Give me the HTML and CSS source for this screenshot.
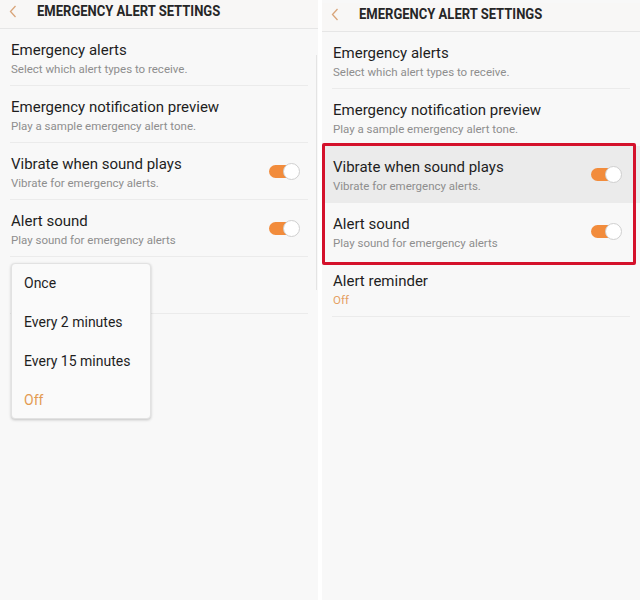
FILE: index.html
```html
<!DOCTYPE html>
<html>
<head>
<meta charset="utf-8">
<link rel="stylesheet" href="styles.css">
</head>
<body>
<div class="panel">
  <div class="header">
    <svg class="back" width="8" height="13" viewBox="0 0 8 13"><path d="M6.5 1 L1.5 6.5 L6.5 12" fill="none" stroke="#d9a57a" stroke-width="1.3"/></svg>
    <span class="title">EMERGENCY ALERT SETTINGS</span>
  </div>
  <div class="row"><div class="row-inner"><div class="txt"><div class="t">Emergency alerts</div><div class="s">Select which alert types to receive.</div></div></div></div>
  <div class="row"><div class="row-inner"><div class="txt"><div class="t">Emergency notification preview</div><div class="s">Play a sample emergency alert tone.</div></div></div></div>
  <div class="row"><div class="row-inner"><div class="txt"><div class="t">Vibrate when sound plays</div><div class="s">Vibrate for emergency alerts.</div></div><span class="toggle"><span class="track"></span><span class="thumb"></span></span></div></div>
  <div class="row"><div class="row-inner"><div class="txt"><div class="t">Alert sound</div><div class="s">Play sound for emergency alerts</div></div><span class="toggle"><span class="track"></span><span class="thumb"></span></span></div></div>
  <div class="row"><div class="row-inner"></div></div>
  <div class="scroll"></div>
  <div class="menu">
    <div class="mi">Once</div>
    <div class="mi">Every 2 minutes</div>
    <div class="mi">Every 15 minutes</div>
    <div class="mi off">Off</div>
  </div>
</div>
<div class="panel right">
  <div class="header">
    <svg class="back" width="8" height="13" viewBox="0 0 8 13"><path d="M6.5 1 L1.5 6.5 L6.5 12" fill="none" stroke="#d9a57a" stroke-width="1.3"/></svg>
    <span class="title">EMERGENCY ALERT SETTINGS</span>
  </div>
  <div class="row"><div class="row-inner"><div class="txt"><div class="t">Emergency alerts</div><div class="s">Select which alert types to receive.</div></div></div></div>
  <div class="row"><div class="row-inner"><div class="txt"><div class="t">Emergency notification preview</div><div class="s">Play a sample emergency alert tone.</div></div></div></div>
  <div class="row hl"><div class="row-inner nb"><div class="txt"><div class="t">Vibrate when sound plays</div><div class="s">Vibrate for emergency alerts.</div></div><span class="toggle"><span class="track"></span><span class="thumb"></span></span></div></div>
  <div class="row"><div class="row-inner nb"><div class="txt"><div class="t">Alert sound</div><div class="s">Play sound for emergency alerts</div></div><span class="toggle"><span class="track"></span><span class="thumb"></span></span></div></div>
  <div class="row"><div class="row-inner"><div class="txt"><div class="t">Alert reminder</div><div class="s orange">Off</div></div></div></div>
  <div class="redbox"></div>
</div>
</body>
</html>
```
FILE: styles.css
```css
html, body {
  margin: 0;
  padding: 0;
}
body {
  width: 640px;
  height: 600px;
  background: #ffffff;
  display: flex;
  gap: 4px;
  font-family: Roboto, "Noto Sans", sans-serif;
  overflow: hidden;
}
.panel {
  position: relative;
  width: 318px;
  height: 600px;
  background: #f8f8f8;
  flex: none;
}
.panel.right {
  padding-top: 3px;
  box-sizing: border-box;
}
.header {
  border-bottom: 1px solid #e6e6e6;
  background: #f8f7f6;
  display: flex;
  align-items: flex-start;
  padding-top: 5px;
  box-sizing: border-box;
  height: 29px;
}
.back {
  margin-left: 9px;
  flex: none;
}
.title {
  margin-left: 20px;
  font-weight: 700;
  font-size: 14px;
  line-height: 13px;
  color: #262626;
  transform: scaleX(0.93);
  transform-origin: left center;
  white-space: nowrap;
}
.row {
  padding: 0 10px;
}
.row.hl {
  background: #ebebeb;
}
.row-inner {
  display: flex;
  align-items: center;
  justify-content: space-between;
  padding: 12px 8px 9px 1px;
  border-bottom: 1px solid #ebebeb;
  height: 35px;
}
.row-inner.nb {
  border-bottom-color: transparent;
}
.t {
  font-size: 15px;
  line-height: 19px;
  color: #1e1e1e;
  white-space: nowrap;
}
.s {
  font-size: 11.5px;
  line-height: 16px;
  margin-top: 1px;
  color: #8e8e8e;
  white-space: nowrap;
}
.s.orange {
  color: #e5a061;
}
.toggle {
  position: relative;
  width: 31px;
  height: 17px;
  flex: none;
  margin-top: -3px;
}
.track {
  position: absolute;
  left: 0;
  top: 2px;
  width: 27px;
  height: 13px;
  border-radius: 7px;
  background: #f28c3c;
}
.thumb {
  position: absolute;
  right: 0;
  top: 0;
  width: 15px;
  height: 15px;
  border-radius: 50%;
  background: #ffffff;
  border: 1px solid #cfcfcf;
}
.scroll {
  position: absolute;
  left: 316px;
  top: 55px;
  width: 1px;
  height: 235px;
  background: #e4e4e4;
}
.menu {
  position: absolute;
  left: 11px;
  top: 263px;
  width: 140px;
  background: #fafafa;
  border: 1px solid #e2e2e2;
  border-radius: 4px;
  box-shadow: 0 1px 3px rgba(0,0,0,0.22);
  box-sizing: border-box;
}
.mi {
  height: 39px;
  line-height: 39px;
  padding-left: 12px;
  font-size: 14px;
  color: #1e1e1e;
}
.mi.off {
  color: #e39a52;
  height: 37px;
}
.redbox {
  position: absolute;
  left: 0;
  top: 143px;
  width: 314px;
  height: 122px;
  border: 3px solid #d4112b;
  border-radius: 2px;
  box-sizing: border-box;
}
```
